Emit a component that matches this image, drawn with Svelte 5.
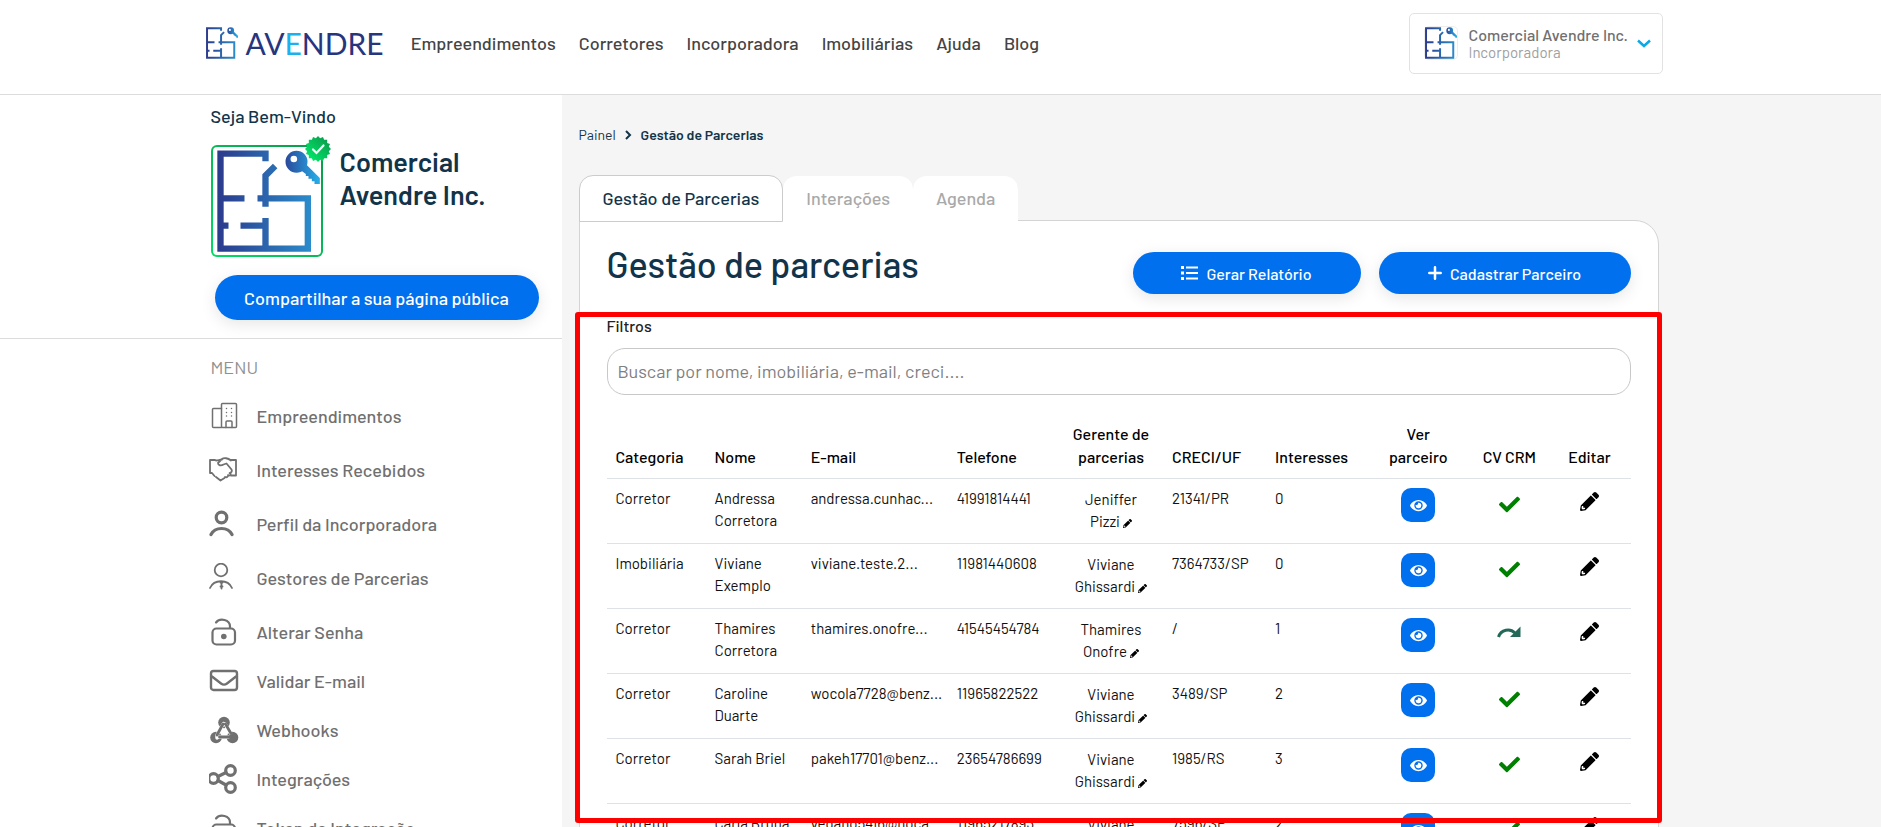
<script>
  let query = '';

  const nav = ['Empreendimentos', 'Corretores', 'Incorporadora', 'Imobiliárias', 'Ajuda', 'Blog'];

  const menu = [
    { icon: 'building', label: 'Empreendimentos' },
    { icon: 'handshake', label: 'Interesses Recebidos' },
    { icon: 'user', label: 'Perfil da Incorporadora' },
    { icon: 'manager', label: 'Gestores de Parcerias' },
    { icon: 'lock', label: 'Alterar Senha' },
    { icon: 'mail', label: 'Validar E-mail', compact: true },
    { icon: 'webhook', label: 'Webhooks', compact: true },
    { icon: 'share', label: 'Integrações', compact: true },
    { icon: 'lock', label: 'Token de Integração', compact: true },
  ];

  const columns = [
    { label: 'Categoria', width: 99 },
    { label: 'Nome', width: 96 },
    { label: 'E-mail', width: 146 },
    { label: 'Telefone', width: 111 },
    { label: 'Gerente de parcerias', width: 104, center: true },
    { label: 'CRECI/UF', width: 103 },
    { label: 'Interesses', width: 100 },
    { label: 'Ver parceiro', width: 104, center: true, narrow: true },
    { label: 'CV CRM', width: 78, center: true },
    { label: 'Editar', width: 82, center: true },
  ];

  const partners = [
    { category: 'Corretor', name: 'Andressa Corretora', email: 'andressa.cunhac...', phone: '41991814441', manager: ['Jeniffer', 'Pizzi'], creci: '21341/PR', interests: 0, synced: true },
    { category: 'Imobiliária', name: 'Viviane Exemplo', email: 'viviane.teste.2...', phone: '11981440608', manager: ['Viviane', 'Ghissardi'], creci: '7364733/SP', interests: 0, synced: true },
    { category: 'Corretor', name: 'Thamires Corretora', email: 'thamires.onofre...', phone: '41545454784', manager: ['Thamires', 'Onofre'], creci: '/', interests: 1, synced: false },
    { category: 'Corretor', name: 'Caroline Duarte', email: 'wocola7728@benz...', phone: '11965822522', manager: ['Viviane', 'Ghissardi'], creci: '3489/SP', interests: 2, synced: true },
    { category: 'Corretor', name: 'Sarah Briel', email: 'pakeh17701@benz...', phone: '23654786699', manager: ['Viviane', 'Ghissardi'], creci: '1985/RS', interests: 3, synced: true },
    { category: 'Corretor', name: 'Carla Bruna', email: 'vegano5416@noca...', phone: '11965217893', manager: ['Viviane', 'Ghissardi'], creci: '7596/SP', interests: 2, synced: true },
  ];

  $: term = query.trim().toLowerCase();
  $: rows = partners.filter((p) =>
    [p.category, p.name, p.email, p.creci].join(' ').toLowerCase().includes(term)
  );

  // points of the seal behind the verified tick
  const seal = Array.from({ length: 32 }, (_, i) => {
    const r = i % 2 ? 11 : 13;
    const a = (i * Math.PI) / 16 - Math.PI / 2;
    return `${(14 + r * Math.cos(a)).toFixed(2)},${(14 + r * Math.sin(a)).toFixed(2)}`;
  }).join(' ');
</script>

{#snippet plan(id)}
  <svg class="plan" viewBox="80 162 308 306" aria-hidden="true">
    <defs>
      <linearGradient {id} gradientUnits="userSpaceOnUse" x1="80" y1="0" x2="388" y2="0">
        <stop offset="0" stop-color="#2b3a8c" />
        <stop offset="1" stop-color="#2a93d1" />
      </linearGradient>
      <linearGradient id="{id}-key" gradientUnits="userSpaceOnUse" x1="286" y1="0" x2="388" y2="0">
        <stop offset="0" stop-color="#2b4a9c" />
        <stop offset="1" stop-color="#25b0ea" />
      </linearGradient>
    </defs>
    <g fill="none" stroke="url(#{id})" stroke-width="19">
      <path d="M225 196V173H90V458H352V307H201M90 307H162M254 210L225 239V332M90 389H114M150 389H225M225 366V458" />
    </g>
    <g fill="url(#{id}-key)">
      <path fill-rule="evenodd" d="M318 164a33 33 0 1 0 0 66 33 33 0 1 0 0-66zm-8 15a10 10 0 1 1 0 20 10 10 0 1 1 0-20z" />
      <path d="M348 206l40 40v18h-16v-8h-8v-8h-10v-8h-8v-6l-16-12z" />
    </g>
  </svg>
{/snippet}

{#snippet pencil(size)}
  <svg width={size} height={size} viewBox="0 0 512 512" fill="currentColor" aria-hidden="true">
    <path d="M497.9 142.1l-46.1 46.1c-4.7 4.7-12.3 4.7-17 0l-111-111c-4.7-4.7-4.7-12.3 0-17l46.1-46.1c18.7-18.7 49.1-18.7 67.9 0l60.1 60.1c18.8 18.7 18.8 49.1 0 67.9zM284.2 99.8L21.6 362.4.4 483.9c-2.9 16.4 11.4 30.6 27.8 27.8l121.5-21.3 262.6-262.6c4.7-4.7 4.7-12.3 0-17l-111-111c-4.8-4.7-12.4-4.7-17.1 0zM88 424h48v36.3l-64.5 11.3-31.1-31.1L51.7 376H88v48z" />
  </svg>
{/snippet}

{#snippet menuIcon(name)}
  <svg width="30" height="30" viewBox="0 0 30 30" fill="none" stroke="currentColor" stroke-linecap="round" stroke-linejoin="round" aria-hidden="true">
    {#if name === 'building'}
      <g stroke-width="1.5">
        <rect x="12.5" y="2.5" width="15" height="24" rx="1" />
        <path d="M12.5 7.5H4.5a1 1 0 0 0-1 1v17a1 1 0 0 0 1 1h8M17 26.5v-5.5a1 1 0 0 1 1-1h4a1 1 0 0 1 1 1V26.5" />
        <path d="M17.5 7.5v.1M22.5 7.5v.1M17.5 11.5v.1M22.5 11.5v.1M17.5 15v.1M22.5 15v.1" />
      </g>
    {:else if name === 'handshake'}
      <g stroke-width="1.8">
        <path d="M6 5H1v13h2l2.5 3M22 5h5v15.5h-5M7 5.5c3 0 3-1 6-1M7 22l4.5 3.5 4-2.5M22 5.5c-3-2.5-7-3-9-1.5l-4 4c0 2.5 3 3 5.500 1.5l3-1 5 6c1 2 0 3-2 3.5M16 22c2 .8 3.5-.5 3-2M19 20.5c2 .5 3-.8 2.5-2.5" />
      </g>
    {:else if name === 'user'}
      <circle cx="12.5" cy="8.5" r="5.3" stroke-width="3.2" />
      <path d="M2 25.500c4-8 17-8 21 0" stroke-width="3.2" />
    {:else if name === 'manager'}
      <circle cx="12" cy="7" r="6.3" stroke-width="1.8" />
      <path d="M1 25c4-9 18-9 22 0" stroke-width="1.8" />
      <path d="M12.5 19v6.5M11.5 19.5h2M11.5 23.500h2" stroke-width="1.8" />
    {:else if name === 'lock'}
      <rect x="3.5" y="11.5" width="22.5" height="16" rx="4" stroke-width="2.2" />
      <circle cx="14.8" cy="19.5" r="2.8" fill="currentColor" stroke="none" />
      <path d="M7 5.500c4-5 14-3 14 4V11" stroke-width="2.2" />
    {:else if name === 'mail'}
      <rect x="2" y="5" width="26" height="19" rx="2.5" stroke-width="2.4" />
      <path d="M3 10.5l9 7c2 1.5 4 1.5 6 0l9-7" stroke-width="2.4" />
    {:else if name === 'webhook'}
      <g fill="currentColor" stroke="none">
        <circle cx="15" cy="7.5" r="5.8" />
        <circle cx="7" cy="22.5" r="5.8" />
        <circle cx="23.5" cy="22.5" r="5.8" />
      </g>
      <path d="M14.500 8.5L8 20v3M16 9l5.5 9M8 22h11.500" stroke="#fff" stroke-width="3.4" />
      <path d="M14 9L8 20M16.500 9l5.5 9.5M10.500 22h12" stroke-width="2.8" />
    {:else}
      <g stroke-width="3.2">
        <circle cx="4.5" cy="14.5" r="4.8" />
        <circle cx="21.5" cy="6.5" r="4.8" />
        <circle cx="21.5" cy="23.5" r="4.8" />
        <path d="M9 12.5L17 8.5M9 16.5l8 4.5" />
      </g>
    {/if}
  </svg>
{/snippet}

<div class="page">
  <header>
    <div class="header-inner">
      <a class="logo" href="#inicio" aria-label="Avendre">
        {@render plan('logo-top')}
        <span>AV<b>E</b>NDRE</span>
      </a>
      <nav>
        {#each nav as item}
          <a href="#{item}">{item}</a>
        {/each}
      </nav>
      <button class="account" type="button">
        <span class="account-picture">{@render plan('logo-account')}</span>
        <span class="account-text">
          <strong>Comercial Avendre Inc.</strong>
          <small>Incorporadora</small>
        </span>
        <svg width="14" height="9" viewBox="0 0 14 9" fill="none" stroke="#0aa9e6" stroke-width="2.5" aria-hidden="true"><path d="M1 1.5l6 5.5 6-5.5" /></svg>
      </button>
    </div>
  </header>

  <div class="body">
    <aside>
      <section class="profile">
        <div class="side-inner">
          <p class="welcome">Seja Bem-Vindo</p>
          <div class="company">
            <div class="picture">
              {@render plan('logo-profile')}
              <svg class="badge" width="28" height="28" viewBox="0 0 28 28" aria-label="Verificado" role="img">
                <defs>
                  <linearGradient id="seal" x1="1" y1="0" x2="0" y2="1">
                    <stop offset="0.1" stop-color="#0b9a4b" />
                    <stop offset="0.8" stop-color="#00e266" />
                  </linearGradient>
                </defs>
                <polygon points={seal} fill="url(#seal)" />
                <path d="M9 14.5l3.5 3.5 7-7.5" fill="none" stroke="#fff" stroke-width="2.2" stroke-linecap="round" />
              </svg>
            </div>
            <h2>Comercial Avendre Inc.</h2>
          </div>
          <button class="pill share" type="button">Compartilhar a sua página pública</button>
        </div>
      </section>
      <div class="side-inner">
        <p class="menu-title">MENU</p>
        <ul>
          {#each menu as item}
            <li class:compact={item.compact}>
              <a href="#{item.icon}">{@render menuIcon(item.icon)}{item.label}</a>
            </li>
          {/each}
        </ul>
      </div>
    </aside>

    <main>
      <div class="breadcrumb">
        <a href="#painel">Painel</a>
        <svg width="7" height="10" viewBox="0 0 7 10" fill="none" stroke="currentColor" stroke-width="2" aria-hidden="true"><path d="M1 1l4 4-4 4" /></svg>
        <strong>Gestão de Parcerias</strong>
      </div>

      <div class="tabs" role="tablist">
        <button class="active" type="button" role="tab" aria-selected="true">Gestão de Parcerias</button>
        <button type="button" role="tab" aria-selected="false">Interações</button>
        <button type="button" role="tab" aria-selected="false">Agenda</button>
      </div>

      <div class="panel">
        <div class="panel-head">
          <h1>Gestão de parcerias</h1>
          <button class="pill report" type="button">
            <svg width="17" height="14" viewBox="0 0 17 14" fill="#fff" aria-hidden="true"><path d="M0 0h3v3H0zM0 5.5h3v3H0zM0 11h3v3H0zM5 .5h12v2H5zM5 6h12v2H5zM5 11.5h12v2H5z" /></svg>
            Gerar Relatório
          </button>
          <button class="pill register" type="button">
            <svg width="14" height="14" viewBox="0 0 14 14" fill="none" stroke="#fff" stroke-width="2.5" stroke-linecap="round" aria-hidden="true"><path d="M7 1.3v11.4M1.3 7h11.4" /></svg>
            Cadastrar Parceiro
          </button>
        </div>

        <label for="search">Filtros</label>
        <input id="search" type="text" placeholder="Buscar por nome, imobiliária, e-mail, creci...." bind:value={query} />

        <table>
          <colgroup>
            {#each columns as column}
              <col style="width: {column.width}px" />
            {/each}
          </colgroup>
          <thead>
            <tr>
              {#each columns as column}
                <th class:center={column.center} class:narrow={column.narrow}>{column.label}</th>
              {/each}
            </tr>
          </thead>
          <tbody>
            {#each rows as row}
              <tr>
                <td>{row.category}</td>
                <td>{row.name}</td>
                <td>{row.email}</td>
                <td>{row.phone}</td>
                <td class="center">
                  {row.manager[0]}<br />{row.manager[1]}
                  <button class="icon" type="button" aria-label="Alterar gerente">{@render pencil(9)}</button>
                </td>
                <td>{row.creci}</td>
                <td>{row.interests}</td>
                <td class="center">
                  <button class="view" type="button" aria-label="Ver parceiro">
                    <svg width="17" height="15" viewBox="0 0 576 512" fill="#fff" aria-hidden="true"><path d="M572.52 241.4C518.29 135.59 410.93 64 288 64S57.68 135.64 3.48 241.41a32.35 32.35 0 0 0 0 29.19C57.71 376.41 165.07 448 288 448s230.32-71.64 284.52-177.41a32.35 32.35 0 0 0 0-29.19zM288 400a144 144 0 1 1 144-144 143.93 143.93 0 0 1-144 144zm0-240a95.31 95.31 0 0 0-25.31 3.79 47.85 47.85 0 0 1-66.9 66.9A95.78 95.78 0 1 0 288 160z" /></svg>
                  </button>
                </td>
                <td class="center status">
                  {#if row.synced}
                    <svg width="21" height="21" viewBox="0 0 512 512" fill="#008000" role="img" aria-label="Sincronizado"><path d="M173.9 439.4l-166.4-166.4c-10-10-10-26.2 0-36.2l36.2-36.2c10-10 26.2-10 36.2 0L192 312.7 432.1 72.6c10-10 26.2-10 36.2 0l36.2 36.2c10 10 10 26.2 0 36.2l-294.4 294.4c-10 10-26.2 10-36.2 0z" /></svg>
                  {:else}
                    <svg width="24" height="21" viewBox="0 0 24 21" role="img" aria-label="Enviar"><path d="M1.5 13C4 5.5 13 4 18 9" fill="none" stroke="#24685a" stroke-width="3" /><path d="M23.5 2.5v10.5H13z" fill="#24685a" /></svg>
                  {/if}
                </td>
                <td class="center edit">
                  <button class="icon" type="button" aria-label="Editar">{@render pencil(19)}</button>
                </td>
              </tr>
            {/each}
          </tbody>
        </table>
      </div>

      <div class="highlight"></div>
    </main>
  </div>
</div>

<style>
  :global(body) {
    margin: 0;
  }

  .page {
    height: 100vh;
    overflow: hidden;
    display: flex;
    flex-direction: column;
    background: #f5f5f5;
    color: #12344a;
    font-family: Barlow, Roboto, sans-serif;
    font-size: 16px;
  }

  .page * {
    box-sizing: border-box;
  }

  button,
  input {
    font-family: inherit;
  }

  button {
    border: 0;
    padding: 0;
    cursor: pointer;
  }

  a {
    color: inherit;
    text-decoration: none;
  }

  svg {
    display: block;
    flex: none;
  }

  .plan {
    width: 100%;
    height: 100%;
  }

  header {
    flex: none;
    background: #fff;
    border-bottom: 1px solid #dcdcdc;
  }

  .header-inner {
    max-width: 1470px;
    height: 94px;
    margin: 0 auto;
    padding: 0 13px 8px 0;
    display: flex;
    align-items: center;
  }

  .logo {
    display: flex;
    align-items: center;
    gap: 8px;
    color: #27357e;
    font-family: Lato, sans-serif;
    font-size: 30px;
    line-height: 32px;
  }

  .logo .plan {
    width: 32px;
    height: 32px;
  }

  .logo b {
    color: #1cb0ee;
    font-weight: 400;
  }

  nav {
    display: flex;
    gap: 23px;
    margin-left: 27px;
    color: #444;
    font-size: 18px;
    font-weight: 500;
  }

  .account {
    display: flex;
    align-items: center;
    width: 254px;
    height: 61px;
    margin-left: auto;
    padding: 0 11px 0 14px;
    background: #fff;
    border: 1px solid #e2e2e2;
    border-radius: 5px;
    text-align: left;
  }

  .account-picture {
    width: 34px;
    height: 34px;
    border: 1px solid #eee;
    border-radius: 5px;
  }

  .account-text {
    display: flex;
    flex: 1;
    flex-direction: column;
    margin-left: 11px;
    white-space: nowrap;
  }

  .account strong {
    color: #707070;
    font-size: 16px;
    font-weight: 500;
    line-height: 18px;
  }

  .account small {
    color: #a0a0a0;
    font-size: 15px;
    line-height: 17px;
  }

  .body {
    flex: 1;
    min-height: 0;
    display: grid;
    grid-template-columns: calc(50% - 379px) 1fr;
    grid-template-rows: minmax(0, 1fr);
  }

  aside {
    background: #fff;
  }

  .side-inner {
    width: 351px;
    margin-left: auto;
  }

  .profile {
    padding: 10px 0 18px;
    border-bottom: 1px solid #dcdcdc;
  }

  .welcome {
    margin: 0;
    font-size: 18px;
    font-weight: 500;
    line-height: 22px;
  }

  .company {
    display: flex;
    align-items: flex-start;
    gap: 17px;
    margin-top: 18px;
  }

  .picture {
    position: relative;
    width: 112px;
    height: 112px;
    padding: 3px 1px 3px 4px;
    border: 2px solid transparent;
    border-radius: 6px;
    background: linear-gradient(#fff, #fff) padding-box, linear-gradient(45deg, #00dc64, #0b9a4b) border-box;
  }

  .badge {
    position: absolute;
    top: -12px;
    right: -11px;
  }

  h2 {
    width: 180px;
    margin: 0;
    font-size: 27px;
    font-weight: 600;
    line-height: 33px;
  }

  .pill {
    display: flex;
    align-items: center;
    justify-content: center;
    gap: 8px;
    height: 42px;
    color: #fff;
    background: #0070ee;
    border-radius: 23px;
    box-shadow: 0 4px 16px rgba(0, 0, 0, 0.1);
    font-size: 16px;
    font-weight: 500;
  }

  .share {
    width: 324px;
    height: 45px;
    margin: 18px 0 0 4px;
    font-size: 18px;
  }

  .menu-title {
    margin: 17px 0 13px;
    color: #909090;
    font-size: 18px;
    line-height: 22px;
  }

  ul {
    margin: 0;
    padding: 0;
    list-style: none;
  }

  li {
    margin-top: 5px;
  }

  li.compact {
    margin-top: 0;
  }

  li a {
    display: flex;
    align-items: center;
    gap: 18px;
    height: 49px;
    margin-left: -2px;
    color: #707070;
    font-size: 18px;
    font-weight: 500;
  }

  main {
    position: relative;
    min-height: 0;
    max-width: 1097px;
    padding-left: 17px;
  }

  .breadcrumb {
    display: flex;
    align-items: center;
    gap: 9px;
    margin-top: 30px;
    font-size: 14px;
    line-height: 20px;
  }

  .breadcrumb strong {
    font-weight: 600;
  }

  .tabs {
    position: relative;
    display: flex;
    margin: 30px 0 -2px;
  }

  .tabs button {
    height: 47px;
    padding: 0 23px 1px;
    color: #a9a9a9;
    background: #fff padding-box;
    border: 1px solid transparent;
    border-width: 1px 0;
    border-bottom-color: #fff;
    border-radius: 14px 14px 0 0;
    font-size: 18px;
    font-weight: 500;
  }

  .tabs .active {
    color: #12344a;
    border-width: 1px;
    border-color: #ccc;
  }

  .panel {
    padding: 31px 27px 0;
    background: #fff;
    border: 1px solid #d4d4d4;
    border-radius: 0 24px 0 0;
  }

  .panel-head {
    display: flex;
    align-items: flex-start;
    gap: 18px;
  }

  h1 {
    flex: 1;
    margin: -12px 0 0;
    font-size: 36px;
    font-weight: 500;
    line-height: 48px;
  }

  .report {
    width: 228px;
  }

  .register {
    width: 252px;
  }

  label {
    display: block;
    margin-top: 22px;
    color: #222;
    font-size: 16px;
    font-weight: 500;
    line-height: 20px;
  }

  input {
    display: block;
    width: 100%;
    height: 47px;
    margin-top: 12px;
    padding: 0 10px 1px;
    border: 1px solid #c8c8c8;
    border-radius: 18px;
    background: #fff;
    font-size: 18px;
  }

  input::placeholder {
    color: #808080;
  }

  table {
    width: 100%;
    margin-top: 18px;
    border-collapse: collapse;
    table-layout: fixed;
    color: #111;
    font-size: 15px;
    line-height: 22px;
  }

  th,
  td {
    padding: 8px 9px;
    border-bottom: 1px solid #dee2e6;
    text-align: left;
    vertical-align: top;
  }

  th {
    padding: 9px 9px 10px;
    vertical-align: bottom;
    color: #000;
    font-size: 16px;
    font-weight: 500;
    line-height: 23px;
    white-space: nowrap;
  }

  th.center {
    padding: 9px 4px 10px;
    white-space: normal;
  }

  th.narrow {
    padding: 9px 20px 10px;
  }

  td {
    height: 65px;
  }

  .center {
    text-align: center;
  }

  td.center {
    padding: 9px 2px;
  }

  .icon {
    color: #000;
    background: none;
    vertical-align: middle;
  }

  .view {
    display: inline-flex;
    align-items: center;
    justify-content: center;
    width: 34px;
    height: 34px;
    background: #0070ee;
    border-radius: 10px;
    vertical-align: top;
  }

  .status svg {
    margin: 6px auto 0;
  }

  .edit .icon {
    margin-top: 4px;
    vertical-align: top;
  }

  /* frame drawn over the partners list */
  .highlight {
    position: absolute;
    top: 217px;
    right: -3px;
    bottom: 4px;
    left: 13px;
    border: 5px solid #f00;
    border-radius: 3px;
    pointer-events: none;
  }
</style>
